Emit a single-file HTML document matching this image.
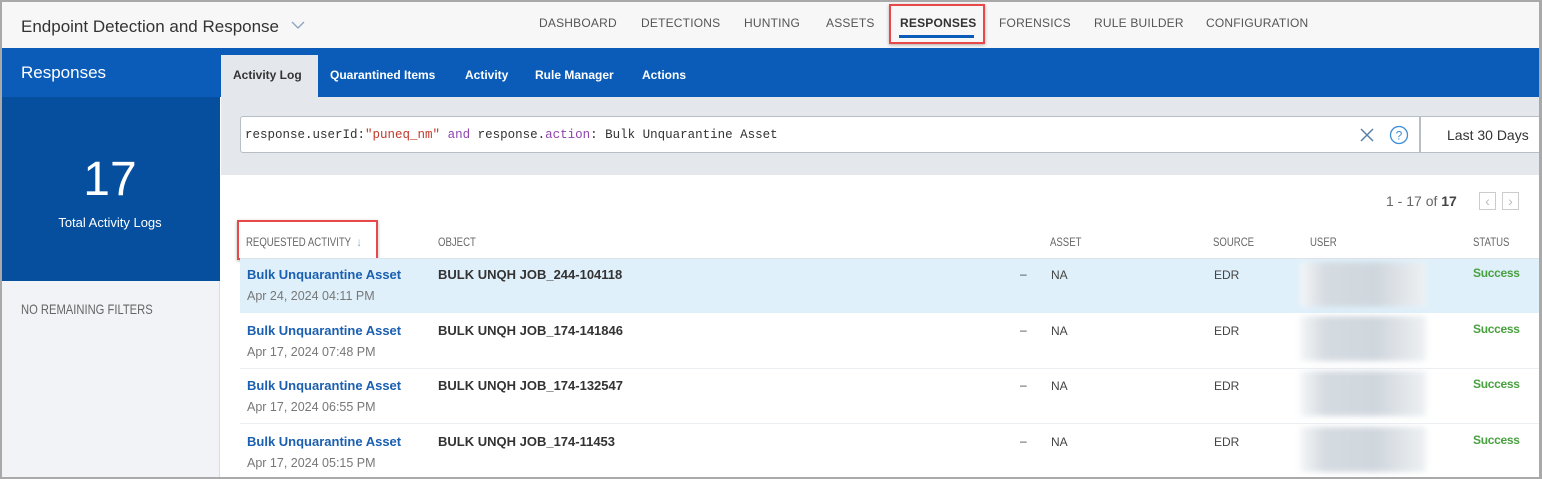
<!DOCTYPE html>
<html><head><style>
*{margin:0;padding:0;box-sizing:border-box}
body{width:1542px;height:479px;overflow:hidden;font-family:"Liberation Sans",sans-serif;background:#fff;position:relative}
.frame{position:absolute;inset:0;border:2px solid #a9a9a9;border-right-width:3px;pointer-events:none;z-index:10}
.abs{position:absolute}
.hdr{left:0;top:0;width:1542px;height:48px;background:#f7f7f8}
.nav{top:16px;font-size:12px;color:#555;letter-spacing:.2px}
.redbox{border:2px solid #e94848;box-shadow:0 1px 3px rgba(0,0,0,.3)}
.gh{font-family:"Liberation Sans Narrow","Liberation Sans",sans-serif;font-size:12px;color:#666;transform:scaleX(.8);transform-origin:left;white-space:nowrap}
.tab{font-size:12px;font-weight:bold;color:#fff;top:68px}
.act{font-size:13px;font-weight:bold;color:#1a5fb0}
.dt{font-size:12.5px;color:#777}
.obj{font-size:13px;font-weight:bold;color:#333}
.c{font-size:12px;color:#444}
.ok{font-size:12px;color:#4aa040;font-weight:bold;letter-spacing:-.3px}
.blur{background:linear-gradient(90deg,#f4f6f8,#d5dbe1 20%,#cfd6dd 60%,#eef1f3);filter:blur(3px)}
</style></head><body>
<div class="frame"></div>
<div class="abs hdr"></div>
<div class="abs" style="left:21px;top:17px;font-size:17px;color:#333">Endpoint Detection and Response</div>
<svg class="abs" style="left:291px;top:20px" width="14" height="10"><path d="M1 2l6 6 6-6" fill="none" stroke="#8aa0c0" stroke-width="1.3"/></svg>
<div class="abs nav" style="left:539px">DASHBOARD</div>
<div class="abs nav" style="left:641px">DETECTIONS</div>
<div class="abs nav" style="left:744px">HUNTING</div>
<div class="abs nav" style="left:826px">ASSETS</div>
<div class="abs nav" style="left:900px;font-weight:bold;color:#333">RESPONSES</div>
<div class="abs" style="left:899px;top:35px;width:75px;height:3px;background:#0b5cb8"></div>
<div class="abs redbox" style="left:889px;top:4px;width:96px;height:40px"></div>
<div class="abs nav" style="left:999px">FORENSICS</div>
<div class="abs nav" style="left:1094px">RULE BUILDER</div>
<div class="abs nav" style="left:1206px">CONFIGURATION</div>

<div class="abs" style="left:0;top:48px;width:1542px;height:49px;background:#0b5cb8"></div>
<div class="abs" style="left:21px;top:63px;font-size:17px;color:#fff">Responses</div>
<div class="abs" style="left:0;top:97px;width:220px;height:184px;background:#054f9e"></div>
<div class="abs" style="left:0;top:152px;width:220px;text-align:center;font-size:48px;color:#fff">17</div>
<div class="abs" style="left:0;top:215px;width:220px;text-align:center;font-size:13px;color:#fff">Total Activity Logs</div>
<div class="abs" style="left:0;top:281px;width:220px;height:198px;background:#f1f3f7;border-right:1px solid #d8dce2"></div>
<div class="abs gh" style="left:21px;top:301px;font-size:14px">NO REMAINING FILTERS</div>

<div class="abs" style="left:221px;top:55px;width:97px;height:42px;background:#e4e7ec"></div>
<div class="abs tab" style="left:233px;color:#333">Activity Log</div>
<div class="abs tab" style="left:330px">Quarantined Items</div>
<div class="abs tab" style="left:465px">Activity</div>
<div class="abs tab" style="left:535px">Rule Manager</div>
<div class="abs tab" style="left:642px">Actions</div>

<div class="abs" style="left:221px;top:97px;width:1321px;height:78px;background:#e4e7ec"></div>
<div class="abs" style="left:240px;top:116px;width:1180px;height:37px;background:#fff;border:1px solid #b8bec6;border-radius:3px 0 0 3px"></div>
<div class="abs" style="left:245px;top:128px;font-family:'Liberation Mono',monospace;font-size:12.5px;color:#333;white-space:pre">response.userId:<span style="color:#c0392b">"puneq_nm"</span> <span style="color:#8e44ad">and</span> response.<span style="color:#8e44ad">action</span>: Bulk Unquarantine Asset</div>
<svg class="abs" style="left:1359px;top:127px" width="16" height="16"><path d="M2 2l12 12M14 2L2 14" stroke="#5a7fa8" stroke-width="1.5"/></svg>
<svg class="abs" style="left:1389px;top:125px" width="20" height="20"><circle cx="10" cy="10" r="8.5" fill="none" stroke="#3d8fd8" stroke-width="1.3"/><text x="10" y="14.5" text-anchor="middle" font-size="12" fill="#3d8fd8" font-family="Liberation Sans">?</text></svg>
<div class="abs" style="left:1420px;top:116px;width:122px;height:37px;background:#fff;border:1px solid #b8bec6"></div>
<div class="abs" style="left:1447px;top:127px;font-size:14px;color:#333">Last 30 Days</div>

<div class="abs" style="left:1386px;top:193px;font-size:14px;color:#666">1 - 17 of <b style="color:#444">17</b></div>
<div class="abs" style="left:1479px;top:192px;width:17px;height:18px;border:1px solid #ccc;color:#bbb;font-size:14px;text-align:center;line-height:16px">&lsaquo;</div>
<div class="abs" style="left:1502px;top:192px;width:17px;height:18px;border:1px solid #ccc;color:#bbb;font-size:14px;text-align:center;line-height:16px">&rsaquo;</div>

<div class="abs gh" style="left:246px;top:235px">REQUESTED ACTIVITY <span style="color:#7aa0d0;margin-left:4px">↓</span></div>
<div class="abs redbox" style="left:237px;top:220px;width:141px;height:40px"></div>
<div class="abs gh" style="left:438px;top:235px">OBJECT</div>
<div class="abs gh" style="left:1050px;top:235px">ASSET</div>
<div class="abs gh" style="left:1213px;top:235px">SOURCE</div>
<div class="abs gh" style="left:1310px;top:235px">USER</div>
<div class="abs gh" style="left:1473px;top:235px">STATUS</div>

<div class="abs" style="left:240px;top:258px;width:1302px;height:55px;background:#dff0fb;border-top:1px solid #dde3ea"></div>
<div class="abs" style="left:240px;top:368px;width:1302px;height:1px;background:#eceff2"></div>
<div class="abs" style="left:240px;top:423px;width:1302px;height:1px;background:#eceff2"></div>

<div class="abs act" style="left:247px;top:267px">Bulk Unquarantine Asset</div>
<div class="abs dt" style="left:247px;top:289px">Apr 24, 2024 04:11 PM</div>
<div class="abs obj" style="left:438px;top:267px">BULK UNQH JOB_244-104118</div>
<div class="abs c" style="left:1020px;top:267px">–</div><div class="abs c" style="left:1051px;top:268px">NA</div><div class="abs c" style="left:1214px;top:268px">EDR</div>
<div class="abs blur" style="left:1300px;top:262px;width:126px;height:45px"></div>
<div class="abs ok" style="left:1473px;top:266px">Success</div>

<div class="abs act" style="left:247px;top:323px">Bulk Unquarantine Asset</div>
<div class="abs dt" style="left:247px;top:345px">Apr 17, 2024 07:48 PM</div>
<div class="abs obj" style="left:438px;top:323px">BULK UNQH JOB_174-141846</div>
<div class="abs c" style="left:1020px;top:323px">–</div><div class="abs c" style="left:1051px;top:324px">NA</div><div class="abs c" style="left:1214px;top:324px">EDR</div>
<div class="abs blur" style="left:1300px;top:316px;width:126px;height:45px"></div>
<div class="abs ok" style="left:1473px;top:322px">Success</div>

<div class="abs act" style="left:247px;top:378px">Bulk Unquarantine Asset</div>
<div class="abs dt" style="left:247px;top:400px">Apr 17, 2024 06:55 PM</div>
<div class="abs obj" style="left:438px;top:378px">BULK UNQH JOB_174-132547</div>
<div class="abs c" style="left:1020px;top:378px">–</div><div class="abs c" style="left:1051px;top:379px">NA</div><div class="abs c" style="left:1214px;top:379px">EDR</div>
<div class="abs blur" style="left:1300px;top:371px;width:126px;height:45px"></div>
<div class="abs ok" style="left:1473px;top:377px">Success</div>

<div class="abs act" style="left:247px;top:434px">Bulk Unquarantine Asset</div>
<div class="abs dt" style="left:247px;top:456px">Apr 17, 2024 05:15 PM</div>
<div class="abs obj" style="left:438px;top:434px">BULK UNQH JOB_174-11453</div>
<div class="abs c" style="left:1020px;top:434px">–</div><div class="abs c" style="left:1051px;top:435px">NA</div><div class="abs c" style="left:1214px;top:435px">EDR</div>
<div class="abs blur" style="left:1300px;top:427px;width:126px;height:45px"></div>
<div class="abs ok" style="left:1473px;top:433px">Success</div>
</body></html>
